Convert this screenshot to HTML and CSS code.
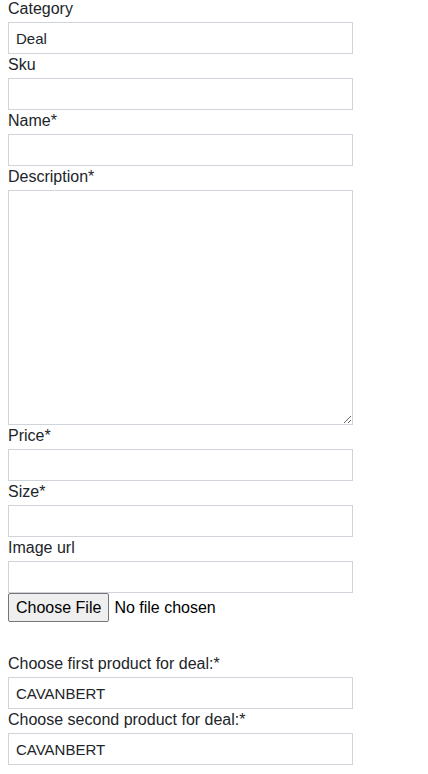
FILE: index.html
```html
<!DOCTYPE html>
<html lang="en">
<head>
<meta charset="utf-8">
<title>Add product</title>
<link rel="stylesheet" href="styles.css">
</head>
<body>
<form class="product-form">
  <label class="field-label" for="category">Category</label>
  <select class="field-control" id="category"><option>Deal</option></select>

  <label class="field-label" for="sku">Sku</label>
  <input class="field-control" id="sku" type="text">

  <label class="field-label" for="name">Name*</label>
  <input class="field-control" id="name" type="text">

  <label class="field-label" for="description">Description*</label>
  <textarea class="field-control field-textarea" id="description"></textarea>

  <label class="field-label" for="price">Price*</label>
  <input class="field-control" id="price" type="text">

  <label class="field-label" for="size">Size*</label>
  <input class="field-control" id="size" type="text">

  <label class="field-label" for="image">Image url</label>
  <input class="field-control field-flush" id="image" type="text">
  <input class="file-input" type="file">

  <label class="field-label" for="first">Choose first product for deal:*</label>
  <select class="field-control" id="first"><option>CAVANBERT</option></select>

  <label class="field-label" for="second">Choose second product for deal:*</label>
  <select class="field-control" id="second"><option>CAVANBERT</option></select>
</form>
</body>
</html>
```
FILE: styles.css
```css
html, body {
  background: #ffffff;
}

body {
  margin: 0 8px;
  font-family: "Liberation Sans", Arial, sans-serif;
  font-size: 16px;
  color: #212529;
}

.product-form {
  display: flex;
  flex-direction: column;
  align-items: flex-start;
  width: 345px;
}

.field-label {
  display: block;
  font-size: 16px;
  line-height: 18px;
  margin-bottom: 4px;
  color: #212529;
}

.field-control {
  display: block;
  box-sizing: border-box;
  width: 345px;
  height: 32px;
  margin: 0 0 2px 0;
  padding: 0 7px;
  border: 1px solid #ced4da;
  border-radius: 0;
  background: #ffffff;
  font-family: "Liberation Sans", Arial, sans-serif;
  font-size: 15px;
  color: #212529;
  outline: none;
  appearance: none;
  -webkit-appearance: none;
}

.field-textarea {
  height: 235px;
  resize: vertical;
  padding: 6px 7px;
}

.field-flush {
  margin-bottom: 0;
}

.file-input {
  display: block;
  height: 29px;
  margin: 0 0 33px 0;
  font-family: "Liberation Sans", Arial, sans-serif;
  font-size: 16px;
  color: #000000;
}

.file-input::file-selector-button {
  height: 29px;
  margin: 0 5px 0 0;
  padding: 0 7px;
  border: 1px solid #767676;
  border-radius: 2px;
  background: #efefef;
  font-family: "Liberation Sans", Arial, sans-serif;
  font-size: 16px;
  color: #000000;
}
```
